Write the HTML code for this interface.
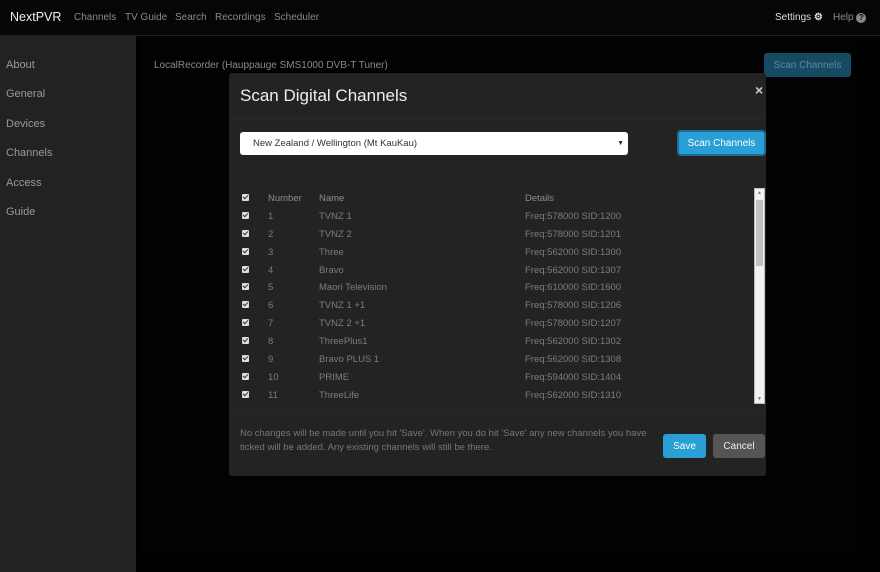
<!DOCTYPE html>
<html><head><style>
*{margin:0;padding:0;box-sizing:border-box}
body{width:880px;height:572px;background:#000;font-family:"Liberation Sans",sans-serif;position:relative;overflow:hidden;color:#999}
.nav{position:absolute;left:0;top:0;width:880px;height:36px;background:#060606;border-bottom:1px solid #222}
.ni{position:absolute;top:12px;font-size:10px;color:#8a8a8a;white-space:nowrap}
.side{position:absolute;left:0;top:36px;width:136px;height:536px;background:#222}
.side div{position:absolute;left:6px;font-size:11px;color:#9a9a9a}
.t{position:absolute;white-space:nowrap}
.btn{display:flex;align-items:center;justify-content:center}
.modal{position:absolute;left:229px;top:73px;width:537px;height:403px;background:#232323;border-radius:3px}
.row{position:absolute;left:0;width:537px;height:18px;font-size:9.5px;color:#7d7d7d}
.row span{position:absolute;top:3px}
.cb{position:absolute;left:13px;top:4px;width:7px;height:7px;background:#ddd;border-radius:1px}
.cb:after{content:"";position:absolute;left:2px;top:0px;width:2px;height:4px;border:solid #333;border-width:0 1px 1px 0;transform:rotate(45deg)}
</style></head><body>
<div class="nav">
<div class="ni" style="left:10px;top:10px;font-size:12.5px;color:#eee">NextPVR</div>
<div class="ni" style="left:74px">Channels</div><div class="ni" style="left:125px">TV Guide</div><div class="ni" style="left:175px">Search</div><div class="ni" style="left:215px">Recordings</div><div class="ni" style="left:274px">Scheduler</div>
<div class="ni" style="left:775px;color:#ddd">Settings <b>⚙</b></div>
<div class="ni" style="left:833px">Help <span style="display:inline-block;width:10px;height:10px;border-radius:5px;background:#888;color:#060606;font-size:8px;text-align:center;line-height:10px;font-weight:bold">?</span></div>
</div>
<div class="side">
<div style="top:23px">About</div><div style="top:52px">General</div><div style="top:82px">Devices</div><div style="top:111px">Channels</div><div style="top:141px">Access</div><div style="top:170px">Guide</div>
</div>
<div style="position:absolute;left:140px;top:36px;width:722px;height:516px;background:#020202"></div>
<div class="t" style="left:154px;top:60px;font-size:10px;color:#8a8a8a">LocalRecorder (Hauppauge SMS1000 DVB-T Tuner)</div>
<div class="t btn" style="left:764px;top:53px;width:87px;height:24px;background:#174a63;border-radius:3px;color:#5d8aa0;font-size:10px">Scan Channels</div>
<div class="modal">
<div class="t" style="left:11px;top:13px;font-size:17px;color:#eee">Scan Digital Channels</div>
<div class="t" style="left:526px;top:9px;font-size:14px;color:#ccc;font-weight:bold">×</div>
<div style="position:absolute;left:0;top:46px;width:537px;height:1px;background:#282828"></div>
<div class="t" style="left:11px;top:59px;width:388px;height:23px;background:#fff;border-radius:3px;font-size:9.5px;color:#333;line-height:23px;padding-left:13px">New Zealand / Wellington (Mt KauKau)<span style="position:absolute;right:4px;font-size:7px">▼</span></div>
<div class="t btn" style="left:448px;top:57px;width:89px;height:26px;background:#2a9fd6;border:2px solid #1d6e94;border-radius:4px;color:#fff;font-size:10px">Scan Channels</div>
<div style="position:absolute;left:0;top:0;width:525px;height:340px;overflow:hidden">
<div class="row" style="top:117px;color:#8d8d8d"><div class="cb"></div><span style="left:39px">Number</span><span style="left:90px">Name</span><span style="left:296px">Details</span></div>
<div class="row" style="top:135px"><div class="cb"></div><span style="left:39px">1</span><span style="left:90px">TVNZ 1</span><span style="left:296px">Freq:578000 SID:1200</span></div>
<div class="row" style="top:153px"><div class="cb"></div><span style="left:39px">2</span><span style="left:90px">TVNZ 2</span><span style="left:296px">Freq:578000 SID:1201</span></div>
<div class="row" style="top:171px"><div class="cb"></div><span style="left:39px">3</span><span style="left:90px">Three</span><span style="left:296px">Freq:562000 SID:1300</span></div>
<div class="row" style="top:189px"><div class="cb"></div><span style="left:39px">4</span><span style="left:90px">Bravo</span><span style="left:296px">Freq:562000 SID:1307</span></div>
<div class="row" style="top:206px"><div class="cb"></div><span style="left:39px">5</span><span style="left:90px">Maori Television</span><span style="left:296px">Freq:610000 SID:1600</span></div>
<div class="row" style="top:224px"><div class="cb"></div><span style="left:39px">6</span><span style="left:90px">TVNZ 1 +1</span><span style="left:296px">Freq:578000 SID:1206</span></div>
<div class="row" style="top:242px"><div class="cb"></div><span style="left:39px">7</span><span style="left:90px">TVNZ 2 +1</span><span style="left:296px">Freq:578000 SID:1207</span></div>
<div class="row" style="top:260px"><div class="cb"></div><span style="left:39px">8</span><span style="left:90px">ThreePlus1</span><span style="left:296px">Freq:562000 SID:1302</span></div>
<div class="row" style="top:278px"><div class="cb"></div><span style="left:39px">9</span><span style="left:90px">Bravo PLUS 1</span><span style="left:296px">Freq:562000 SID:1308</span></div>
<div class="row" style="top:296px"><div class="cb"></div><span style="left:39px">10</span><span style="left:90px">PRIME</span><span style="left:296px">Freq:594000 SID:1404</span></div>
<div class="row" style="top:314px"><div class="cb"></div><span style="left:39px">11</span><span style="left:90px">ThreeLife</span><span style="left:296px">Freq:562000 SID:1310</span></div>
</div>
<div style="position:absolute;left:525px;top:115px;width:11px;height:216px;background:#f2f2f2;border:1px solid #bbb">
<div style="position:absolute;left:1px;top:11px;width:7px;height:66px;background:#c1c1c1"></div>
<div style="position:absolute;left:2px;top:1px;font-size:5px;color:#777">▲</div>
<div style="position:absolute;left:2px;bottom:1px;font-size:5px;color:#777">▼</div>
</div>
<div style="position:absolute;left:0;top:341px;width:537px;height:1px;background:#282828"></div>
<div class="t" style="left:11px;top:354px;font-size:9.5px;color:#777;line-height:14px">No changes will be made until you hit 'Save'. When you do hit 'Save' any new channels you have<br>ticked will be added. Any existing channels will still be there.</div>
<div class="t btn" style="left:434px;top:361px;width:43px;height:24px;background:#2a9fd6;border-radius:3px;color:#fff;font-size:10px">Save</div>
<div class="t btn" style="left:484px;top:361px;width:52px;height:24px;background:#555;border-radius:3px;color:#eee;font-size:10px">Cancel</div>
</div>
</body></html>
